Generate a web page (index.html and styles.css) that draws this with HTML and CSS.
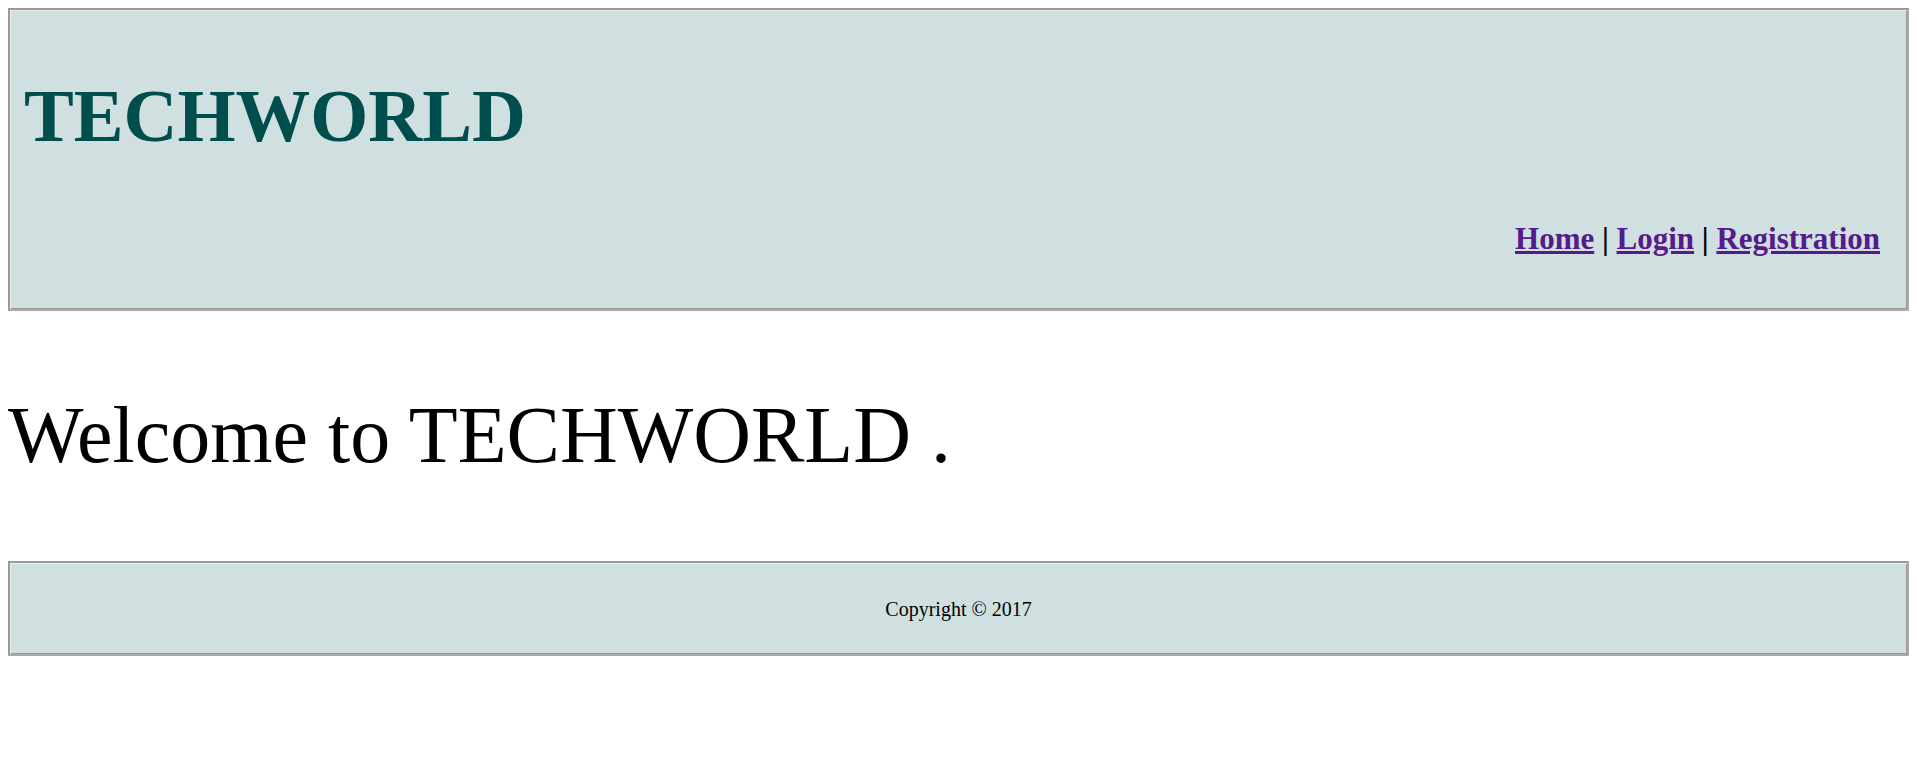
FILE: index.html
```html
<!DOCTYPE html>
<html>
<head>
<meta charset="utf-8">
<title>TECHWORLD</title>
<link rel="stylesheet" href="styles.css">
</head>
<body>
<div class="header">
  <h1 class="brand">TECHWORLD</h1>
  <div class="nav"><a href="#">Home</a> | <a href="#">Login</a> | <a href="#">Registration</a></div>
</div>
<div class="content">
  <p class="welcome">Welcome to TECHWORLD .</p>
</div>
<div class="footer">
  <p class="copy">Copyright © 2017</p>
</div>
</body>
</html>
```
FILE: styles.css
```css
body {
  margin: 8px;
  font-family: "Liberation Serif", "Times New Roman", serif;
  background: #ffffff;
  color: #000000;
}
.header, .footer {
  background: #d0e0e0;
  border-style: solid;
  border-width: 2px;
  border-color: #999999 #aaaaaa #aaaaaa #999999;
  box-shadow: inset 1px 1px 0 #eeeeee, inset -1px -1px 0 #999999;
}
.header {
  padding: 1px 27px 52px 14px;
}
.brand {
  margin: 62px 0 62px 0;
  font-size: 56pt;
  font-weight: bold;
  color: #004d4d;
}
.nav {
  text-align: right;
  font-size: 31px;
  font-weight: bold;
}
.nav a {
  color: #551a8b;
}
.welcome {
  margin: 79px 0 80px 0;
  font-size: 80px;
}
.footer {
  padding: 35px 0 33px 0;
  text-align: center;
}
.copy {
  margin: 0;
  font-size: 20px;
}
```
